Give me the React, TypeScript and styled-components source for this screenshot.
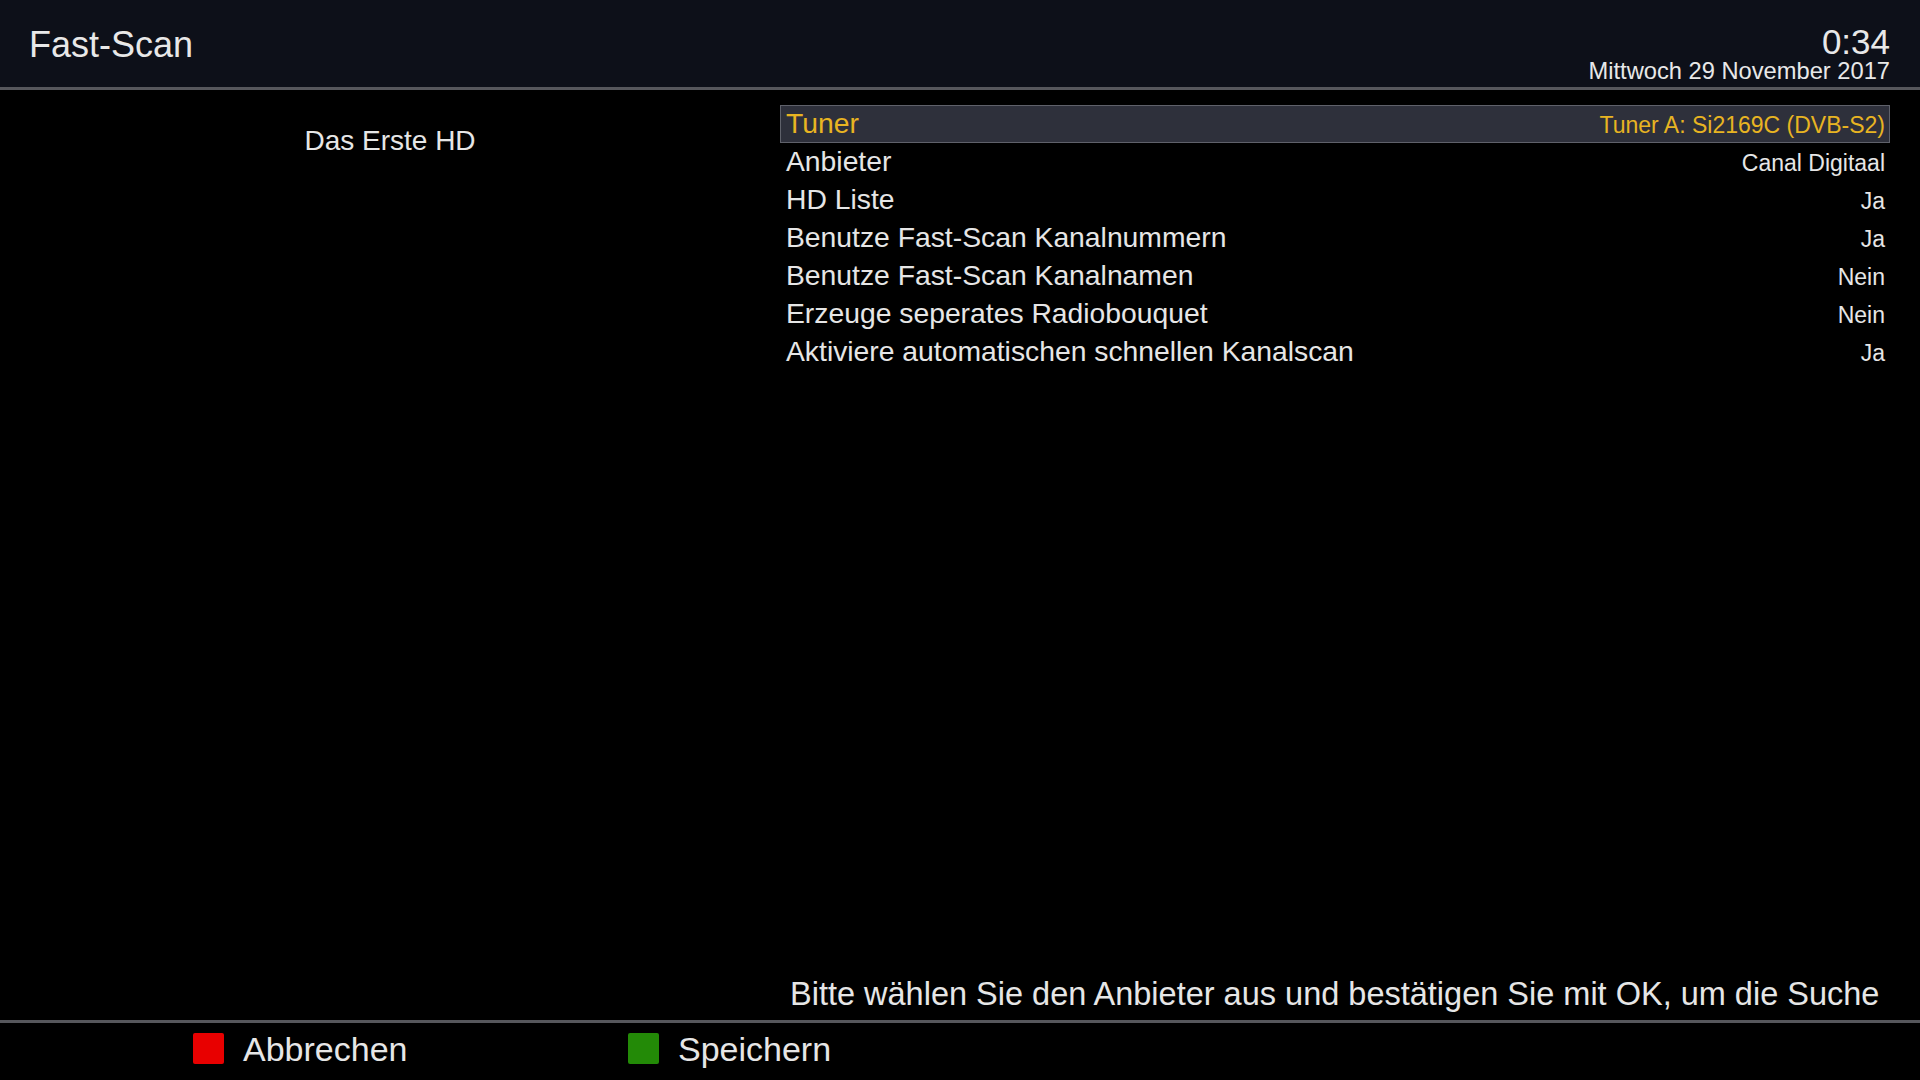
import React from 'react';
import styled, { createGlobalStyle } from 'styled-components';

const GlobalStyle = createGlobalStyle`
  html, body {
    margin: 0;
    padding: 0;
    background: #000;
  }
  body {
    font-family: 'Liberation Sans', Arial, sans-serif;
    color: #e6e6e6;
  }
`;

const Screen = styled.div`
  width: 1920px;
  height: 1080px;
  display: flex;
  flex-direction: column;
  background: #000;
  overflow: hidden;
`;

const Header = styled.header`
  height: 87px;
  flex: none;
  display: flex;
  justify-content: space-between;
  align-items: flex-start;
  padding: 0 30px 0 29px;
  background: #0d1019;
  border-bottom: 3px solid #56575c;
`;

const Title = styled.h1`
  margin: 0;
  padding-top: 25px;
  font-size: 36px;
  font-weight: normal;
  line-height: 40px;
  color: #e8e8e8;
`;

const Clock = styled.div`
  display: flex;
  flex-direction: column;
  align-items: flex-end;
  padding-top: 24.5px;
`;

const Time = styled.span`
  font-size: 35px;
  line-height: 34px;
  color: #e8e8e8;
`;

const DateLine = styled.span`
  font-size: 23.7px;
  line-height: 24px;
  color: #e8e8e8;
`;

const Main = styled.main`
  flex: 1;
  display: grid;
  grid-template-columns: 780px 1fr;
`;

const ServicePanel = styled.div`
  padding-top: 34px;
  text-align: center;
  font-size: 28px;
  line-height: 34px;
  color: #e6e6e6;
`;

const ConfigPanel = styled.div`
  display: flex;
  flex-direction: column;
  padding: 15px 30px 7px 0;
  min-width: 0;
`;

const List = styled.ul`
  list-style: none;
  margin: 0;
  padding: 0;
`;

const Row = styled.li<{ $selected?: boolean }>`
  height: 38px;
  box-sizing: border-box;
  display: flex;
  align-items: baseline;
  justify-content: space-between;
  padding: 0 4px 0 5px;
  line-height: 34px;
  border: 1px solid ${({ $selected }) => ($selected ? '#5f616a' : 'transparent')};
  background: ${({ $selected }) => ($selected ? '#2e303b' : 'transparent')};
  color: ${({ $selected }) => ($selected ? '#e8b422' : '#e6e6e6')};
`;

const Label = styled.span`
  font-size: 28.3px;
`;

const Value = styled.span`
  font-size: 23px;
`;

const HelpText = styled.p`
  margin: auto 0 0;
  padding-left: 10px;
  font-size: 32.5px;
  line-height: 38px;
  white-space: nowrap;
  overflow: hidden;
  color: #e6e6e6;
`;

const Footer = styled.footer`
  height: 60px;
  box-sizing: border-box;
  flex: none;
  display: flex;
  align-items: center;
  padding: 0 0 6px 193px;
  border-top: 3px solid #56575c;
`;

const KeyHint = styled.div`
  width: 435px;
  display: flex;
  align-items: center;
  gap: 19px;
`;

const ColorKey = styled.span<{ $color: string }>`
  width: 31px;
  height: 31px;
  border-radius: 2px;
  background: ${({ $color }) => $color};
  box-shadow: 0 0 2px rgba(0, 0, 0, 0.8);
`;

const KeyLabel = styled.span`
  font-size: 34px;
  line-height: 40px;
  color: #e6e6e6;
`;

const entries: { label: string; value: string }[] = [
  { label: 'Tuner', value: 'Tuner A: Si2169C (DVB-S2)' },
  { label: 'Anbieter', value: 'Canal Digitaal' },
  { label: 'HD Liste', value: 'Ja' },
  { label: 'Benutze Fast-Scan Kanalnummern', value: 'Ja' },
  { label: 'Benutze Fast-Scan Kanalnamen', value: 'Nein' },
  { label: 'Erzeuge seperates Radiobouquet', value: 'Nein' },
  { label: 'Aktiviere automatischen schnellen Kanalscan', value: 'Ja' },
];

export default function App() {
  const selected = 0;
  return (
    <>
      <GlobalStyle />
      <Screen>
        <Header>
          <Title>Fast-Scan</Title>
          <Clock>
            <Time>0:34</Time>
            <DateLine>Mittwoch 29 November 2017</DateLine>
          </Clock>
        </Header>
        <Main>
          <ServicePanel>Das Erste HD</ServicePanel>
          <ConfigPanel>
            <List>
              {entries.map((e, i) => (
                <Row key={e.label} $selected={i === selected}>
                  <Label>{e.label}</Label>
                  <Value>{e.value}</Value>
                </Row>
              ))}
            </List>
            <HelpText>
              Bitte wählen Sie den Anbieter aus und bestätigen Sie mit OK, um die Suche
            </HelpText>
          </ConfigPanel>
        </Main>
        <Footer>
          <KeyHint>
            <ColorKey $color="#e80000" />
            <KeyLabel>Abbrechen</KeyLabel>
          </KeyHint>
          <KeyHint>
            <ColorKey $color="#238a07" />
            <KeyLabel>Speichern</KeyLabel>
          </KeyHint>
        </Footer>
      </Screen>
    </>
  );
}
